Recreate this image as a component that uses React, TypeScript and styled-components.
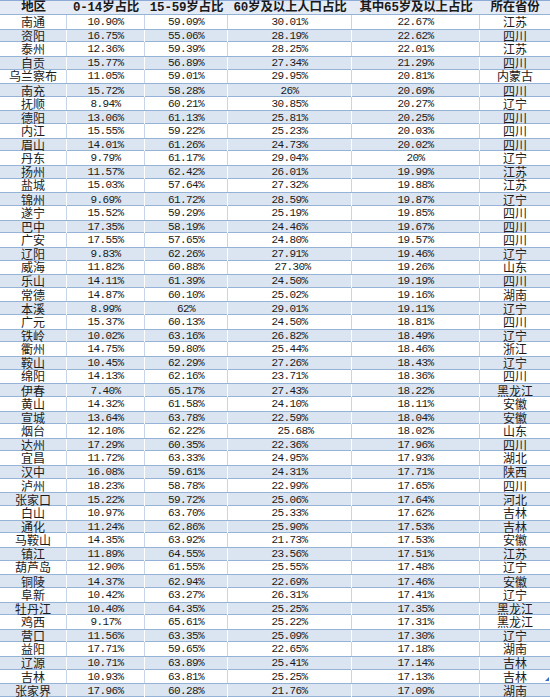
import styled, { createGlobalStyle } from "styled-components";

type Row = [string, string, string, string, string, string];

const rows: Row[] = [
  ["南通", "10.90%", "59.09%", "30.01%", "22.67%", "江苏"],
  ["资阳", "16.75%", "55.06%", "28.19%", "22.62%", "四川"],
  ["泰州", "12.36%", "59.39%", "28.25%", "22.01%", "江苏"],
  ["自贡", "15.77%", "56.89%", "27.34%", "21.29%", "四川"],
  ["乌兰察布", "11.05%", "59.01%", "29.95%", "20.81%", "内蒙古"],
  ["南充", "15.72%", "58.28%", "26%", "20.69%", "四川"],
  ["抚顺", "8.94%", "60.21%", "30.85%", "20.27%", "辽宁"],
  ["德阳", "13.06%", "61.13%", "25.81%", "20.25%", "四川"],
  ["内江", "15.55%", "59.22%", "25.23%", "20.03%", "四川"],
  ["眉山", "14.01%", "61.26%", "24.73%", "20.02%", "四川"],
  ["丹东", "9.79%", "61.17%", "29.04%", "20%", "辽宁"],
  ["扬州", "11.57%", "62.42%", "26.01%", "19.99%", "江苏"],
  ["盐城", "15.03%", "57.64%", "27.32%", "19.88%", "江苏"],
  ["锦州", "9.69%", "61.72%", "28.59%", "19.87%", "辽宁"],
  ["遂宁", "15.52%", "59.29%", "25.19%", "19.85%", "四川"],
  ["巴中", "17.35%", "58.19%", "24.46%", "19.67%", "四川"],
  ["广安", "17.55%", "57.65%", "24.80%", "19.57%", "四川"],
  ["辽阳", "9.83%", "62.26%", "27.91%", "19.46%", "辽宁"],
  ["威海", "11.82%", "60.88%", "\u00a027.30%", "19.26%", "山东"],
  ["乐山", "14.11%", "61.39%", "24.50%", "19.19%", "四川"],
  ["常德", "14.87%", "60.10%", "25.02%", "19.16%", "湖南"],
  ["本溪", "8.99%", "62%", "29.01%", "19.11%", "辽宁"],
  ["广元", "15.37%", "60.13%", "24.50%", "18.81%", "四川"],
  ["铁岭", "10.02%", "63.16%", "26.82%", "18.49%", "辽宁"],
  ["衢州", "14.75%", "59.80%", "25.44%", "18.46%", "浙江"],
  ["鞍山", "10.45%", "62.29%", "27.26%", "18.43%", "辽宁"],
  ["绵阳", "14.13%", "62.16%", "23.71%", "18.36%", "四川"],
  ["伊春", "7.40%", "65.17%", "27.43%", "18.22%", "黑龙江"],
  ["黄山", "14.32%", "61.58%", "24.10%", "18.11%", "安徽"],
  ["宣城", "13.64%", "63.78%", "22.59%", "18.04%", "安徽"],
  ["烟台", "12.10%", "62.22%", "\u00a0\u00a025.68%", "18.02%", "山东"],
  ["达州", "17.29%", "60.35%", "22.36%", "17.96%", "四川"],
  ["宜昌", "11.72%", "63.33%", "24.95%", "17.93%", "湖北"],
  ["汉中", "16.08%", "59.61%", "24.31%", "17.71%", "陕西"],
  ["泸州", "18.23%", "58.78%", "22.99%", "17.65%", "四川"],
  ["张家口", "15.22%", "59.72%", "25.06%", "17.64%", "河北"],
  ["白山", "10.97%", "63.70%", "25.33%", "17.62%", "吉林"],
  ["通化", "11.24%", "62.86%", "25.90%", "17.53%", "吉林"],
  ["马鞍山", "14.35%", "63.92%", "21.73%", "17.53%", "安徽"],
  ["镇江", "11.89%", "64.55%", "23.56%", "17.51%", "江苏"],
  ["葫芦岛", "12.90%", "61.55%", "25.55%", "17.48%", "辽宁"],
  ["铜陵", "14.37%", "62.94%", "22.69%", "17.46%", "安徽"],
  ["阜新", "10.42%", "63.27%", "26.31%", "17.41%", "辽宁"],
  ["牡丹江", "10.40%", "64.35%", "25.25%", "17.35%", "黑龙江"],
  ["鸡西", "9.17%", "65.61%", "25.22%", "17.31%", "黑龙江"],
  ["营口", "11.56%", "63.35%", "25.09%", "17.30%", "辽宁"],
  ["益阳", "17.71%", "59.65%", "22.65%", "17.18%", "湖南"],
  ["辽源", "10.71%", "63.89%", "25.41%", "17.14%", "吉林"],
  ["吉林", "10.93%", "63.81%", "25.25%", "17.13%", "吉林"],
  ["张家界", "17.96%", "60.28%", "21.76%", "17.09%", "湖南"],
];

const headers = ["地区", "0-14岁占比", "15-59岁占比", "60岁及以上人口占比", "其中65岁及以上占比", "所在省份"];

const GlobalStyle = createGlobalStyle`
  html, body {
    margin: 0;
    padding: 0;
    background: #ffffff;
  }
`;

const Sheet = styled.div`
  position: relative;
  width: 550px;
  height: 697px;
  display: grid;
  grid-template-rows: 15px repeat(50, 1fr);
  background: #ffffff;
  overflow: hidden;
`;

const Line = styled.div<{ $band?: boolean; $head?: boolean }>`
  display: grid;
  grid-template-columns: 67px 78px 83px 124px 128px 70px;
  background: ${(p) => (p.$head ? "#e4ebf5" : p.$band ? "#dbe5f1" : "#ffffff")};
  border-top: ${(p) => (p.$head ? "1px solid #8eaad6" : "none")};
  box-shadow: ${(p) =>
    p.$band || p.$head ? "inset 0 -1px 0 #95b3d7" : "none"};
  ${(p) => (p.$band ? "border-top: 1px solid #95b3d7;" : "")}
`;

const Cell = styled.div<{ $band?: boolean; $cjk?: boolean }>`
  display: flex;
  align-items: center;
  justify-content: center;
  white-space: pre;
  color: #1a1a1a;
  border-right: 1px solid ${(p) => (p.$band ? "#ffffff" : "#c7d5ea")};
  font-family: ${(p) =>
    p.$cjk
      ? `"Noto Sans CJK SC", sans-serif`
      : `"Liberation Mono", "Noto Sans CJK SC", monospace`};
  font-size: ${(p) => (p.$cjk ? "12px" : "11px")};
  letter-spacing: ${(p) => (p.$cjk ? "0" : "-0.6px")};
  line-height: 12px;
  &:last-child {
    border-right: none;
  }
`;

const HeadCell = styled.div`
  display: flex;
  align-items: center;
  justify-content: center;
  white-space: nowrap;
  color: #1a1a1a;
  font-family: "Liberation Mono", "Noto Sans CJK SC", monospace;
  font-weight: bold;
  font-size: 12.5px;
  letter-spacing: -0.2px;
  line-height: 13px;
`;

const Handle = styled.div`
  position: absolute;
  right: 1px;
  bottom: 16px;
  width: 0;
  height: 0;
  border-left: 4px solid transparent;
  border-bottom: 4px solid #3a6fc4;
`;

export default function App() {
  return (
    <>
      <GlobalStyle />
      <Sheet>
        <Line $head>
          {headers.map((h) => (
            <HeadCell key={h}>{h}</HeadCell>
          ))}
        </Line>
        {rows.map((r, i) => {
          const band = i % 2 === 1;
          return (
            <Line key={r[0]} $band={band}>
              {r.map((v, j) => (
                <Cell key={j} $band={band} $cjk={j === 0 || j === 5}>
                  {v}
                </Cell>
              ))}
            </Line>
          );
        })}
        <Handle />
      </Sheet>
    </>
  );
}
